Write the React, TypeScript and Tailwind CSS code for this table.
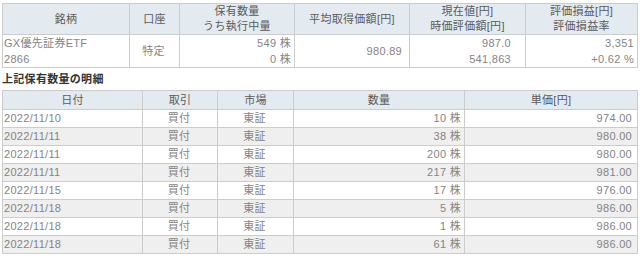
const rows = [
    { date: '2022/11/10', qty: '10', price: '974.00' },
    { date: '2022/11/11', qty: '38', price: '980.00' },
    { date: '2022/11/11', qty: '200', price: '980.00' },
    { date: '2022/11/11', qty: '217', price: '981.00' },
    { date: '2022/11/15', qty: '17', price: '976.00' },
    { date: '2022/11/18', qty: '5', price: '986.00' },
    { date: '2022/11/18', qty: '1', price: '986.00' },
    { date: '2022/11/18', qty: '61', price: '986.00' },
];

const th = 'border border-[#cccccc] bg-[#e3ebf1] font-normal text-[#5a5a5a] text-center p-0';
const td = 'border border-[#cccccc] p-0 pl-[1px] pr-[3px]';

export default function App() {
    return (
        <div
            className="w-[640px] h-[258px] bg-white pt-[3px] px-[2px] text-[11px] tracking-[0.3px] text-[#848484] leading-[15px]"
            style={{ fontFamily: '"Liberation Sans", "Noto Sans CJK JP", sans-serif' }}
        >
            <table className="w-[635px] table-fixed border-collapse">
                <colgroup>
                    <col className="w-[127px]" />
                    <col className="w-[50px]" />
                    <col className="w-[115px]" />
                    <col className="w-[115px]" />
                    <col className="w-[116px]" />
                    <col className="w-[112px]" />
                </colgroup>
                <thead>
                    <tr className="h-[31px]">
                        <th className={th}>銘柄</th>
                        <th className={th}>口座</th>
                        <th className={th}>保有数量<br />うち執行中量</th>
                        <th className={th}>平均取得価額[円]</th>
                        <th className={th}>現在値[円]<br />時価評価額[円]</th>
                        <th className={th}>評価損益[円]<br />評価損益率</th>
                    </tr>
                </thead>
                <tbody>
                    <tr className="h-[32px]">
                        <td className={`${td} leading-[16px]`}>GX優先証券ETF<br />2866</td>
                        <td className={`${td} text-center`}>特定</td>
                        <td className={`${td} text-right leading-[16px]`}>549 株<br />0 株</td>
                        <td className={`${td} text-right pr-[7px]`}>980.89</td>
                        <td className={`${td} text-right pr-[14px] leading-[16px]`}>987.0<br />541,863</td>
                        <td className={`${td} text-right leading-[16px]`}>3,351<br />+0.62 %</td>
                    </tr>
                </tbody>
            </table>

            <div className="h-[22px] flex items-center font-bold text-[#333]">上記保有数量の明細</div>

            <table className="w-[635px] table-fixed border-collapse">
                <colgroup>
                    <col className="w-[140px]" />
                    <col className="w-[75px]" />
                    <col className="w-[76px]" />
                    <col className="w-[171px]" />
                    <col className="w-[173px]" />
                </colgroup>
                <thead>
                    <tr className="h-[19px]">
                        <th className={th}>日付</th>
                        <th className={th}>取引</th>
                        <th className={th}>市場</th>
                        <th className={th}>数量</th>
                        <th className={th}>単価[円]</th>
                    </tr>
                </thead>
                <tbody>
                    {rows.map((r, i) => (
                        <tr key={i} className={`h-[18px] ${i % 2 === 1 ? 'bg-[#efefef]' : 'bg-white'}`}>
                            <td className={td}>{r.date}</td>
                            <td className={`${td} text-center`}>買付</td>
                            <td className={`${td} text-center`}>東証</td>
                            <td className={`${td} text-right`}>{r.qty} 株</td>
                            <td className={`${td} text-right pr-[5px]`}>{r.price}</td>
                        </tr>
                    ))}
                </tbody>
            </table>
        </div>
    );
}
